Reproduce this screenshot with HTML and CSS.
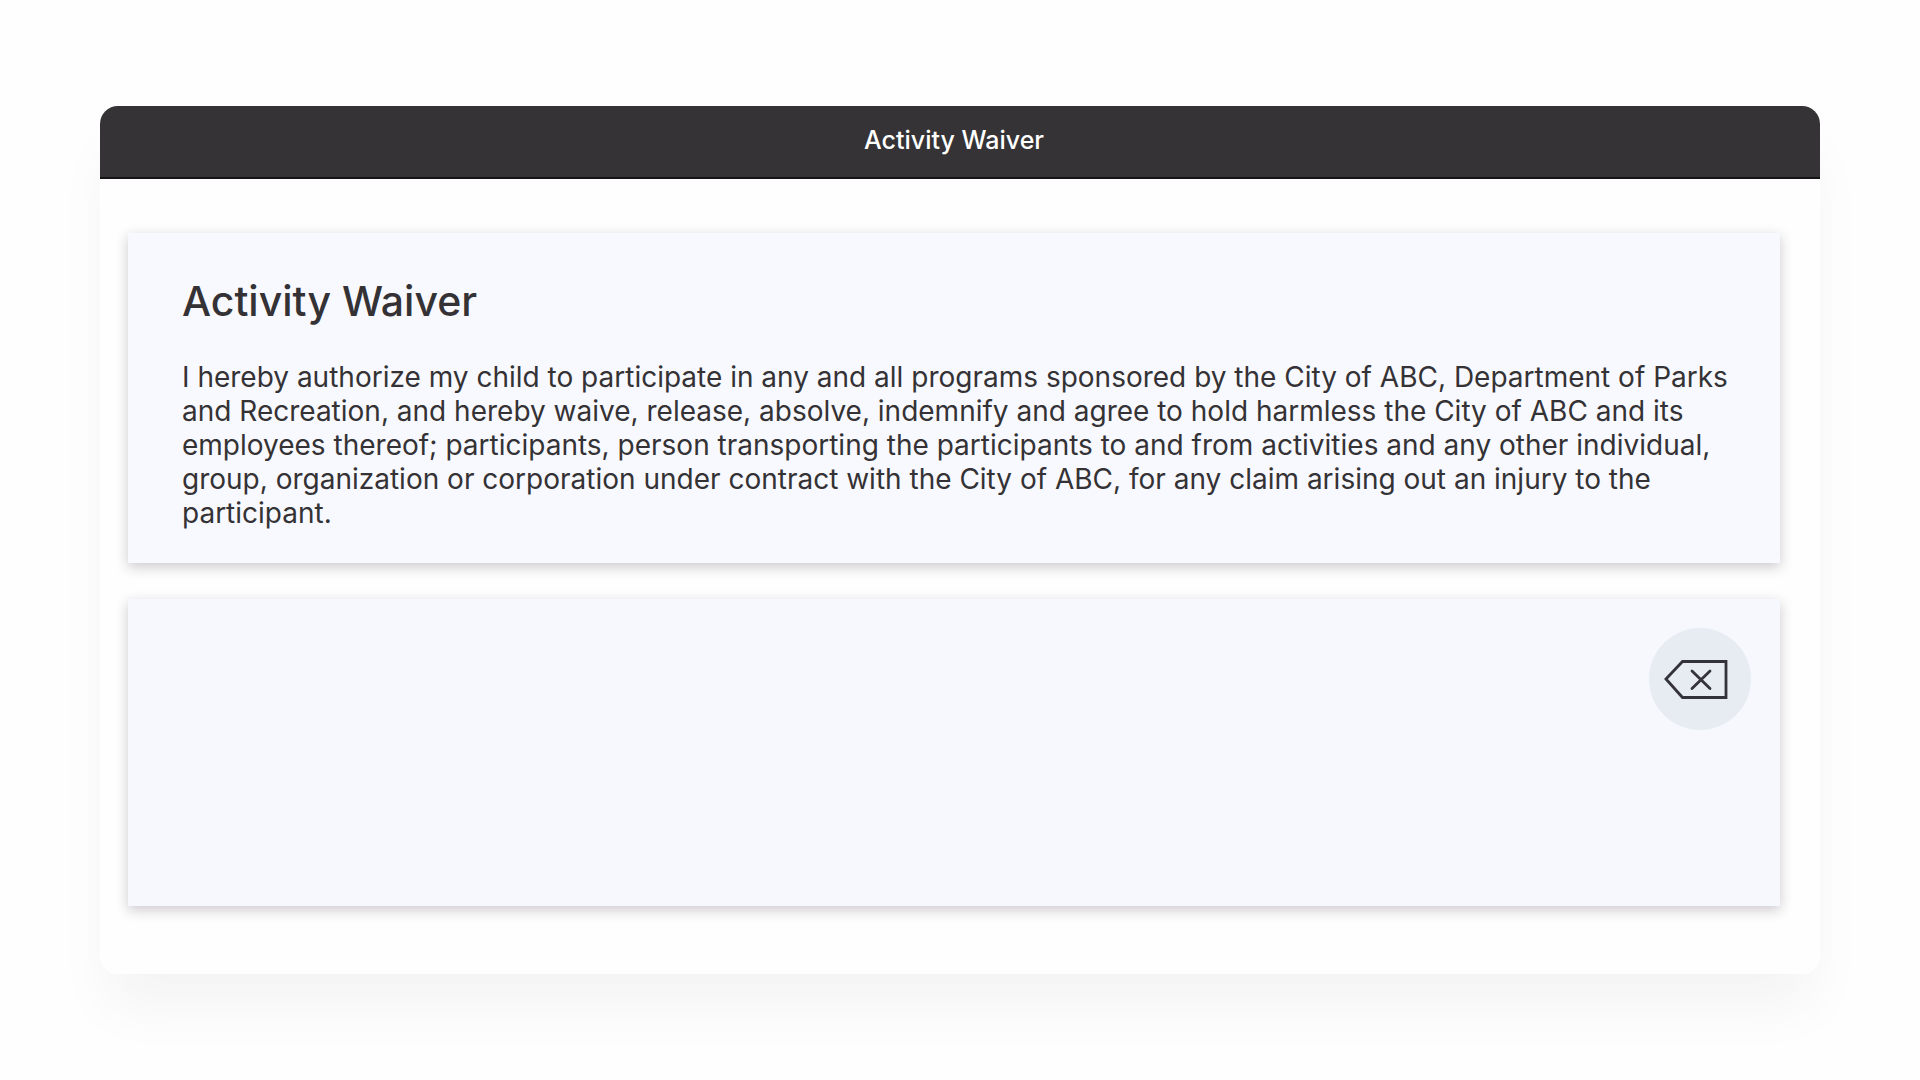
FILE: index.html
```html
<!DOCTYPE html>
<html lang="en">
<head>
  <meta charset="utf-8">
  <meta name="viewport" content="width=device-width, initial-scale=1">
  <title>Activity Waiver</title>
  <link rel="stylesheet" href="styles.css">
</head>
<body>
  <main class="window">
    <header class="window-header">Activity Waiver</header>
    <div class="window-body">
      <article class="card waiver">
        <h1 class="waiver-title">Activity Waiver</h1>
        <p class="waiver-text">I hereby authorize my child to participate in any and all programs sponsored by the City of ABC, Department of Parks and Recreation, and hereby waive, release, absolve, indemnify and agree to hold harmless the City of ABC and its employees thereof; participants, person transporting the participants to and from activities and any other individual, group, organization or corporation under contract with the City of ABC, for any claim arising out an injury to the participant.</p>
      </article>
      <section class="card signature" aria-label="Signature">
        <button class="clear-button" type="button" aria-label="Clear signature">
          <svg class="clear-icon" viewBox="0 0 102 102" fill="none" stroke="currentColor" aria-hidden="true">
            <path d="M17 51 33.500 33.500H77V69.500H33.500Z" stroke-width="2.800"/>
            <path d="M43 43 61 60.500M61 43 43 60.500" stroke-width="2.800" stroke-linecap="round"/>
          </svg>
        </button>
      </section>
    </div>
  </main>
</body>
</html>
```

FILE: styles.css
```css
* {
  box-sizing: border-box;
}

body {
  margin: 0;
  padding: 106px 100px;
  background: #fefefe;
  color: #343235;
  font-family: Inter, "Liberation Sans", sans-serif;
}

.window {
  border-radius: 18px;
  background: #fefefe;
  box-shadow: 0 40px 56px -6px rgba(0, 0, 0, 0.045);
}

.window-header {
  padding: 17px 12px 20px 0;
  border-bottom: 2px solid #151316;
  border-radius: 18px 18px 0 0;
  background: #353335;
  color: #fff;
  font-size: 25px;
  font-weight: 500;
  line-height: 34px;
  text-align: center;
}

.window-body {
  display: flex;
  flex-direction: column;
  gap: 36px;
  padding: 54px 40px 68px 28px;
}

.card {
  background: #f8f9fe;
  box-shadow: 0 4px 12px rgba(50, 35, 50, 0.24);
}

.waiver {
  padding: 42px 40px 33px 54px;
}

.waiver-title {
  margin: 0 0 33px;
  font-size: 41px;
  font-weight: 500;
  line-height: 52px;
}

.waiver-text {
  margin: 0;
  font-size: 28px;
  line-height: 34px;
}

.signature {
  display: flex;
  align-items: flex-start;
  justify-content: flex-end;
  min-height: 307px;
  padding: 29px;
  background: #f6f8fe;
}

.clear-button {
  width: 102px;
  height: 102px;
  padding: 0;
  border: 0;
  border-radius: 50%;
  background: #e7ecf3;
  color: #343339;
  cursor: pointer;
}

.clear-icon {
  display: block;
  width: 100%;
  height: 100%;
}
```
